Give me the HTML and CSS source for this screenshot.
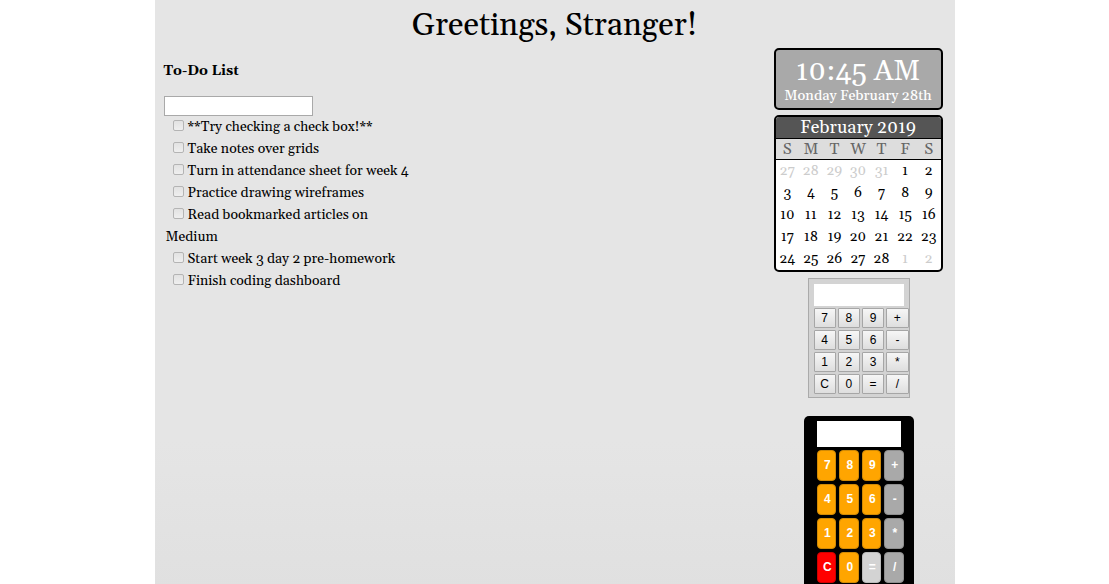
FILE: index.html
```html
<!DOCTYPE html>
<html lang="en">
<head>
<meta charset="utf-8">
<meta name="viewport" content="width=device-width, initial-scale=1">
<title>Dashboard</title>
<link rel="stylesheet" href="styles.css">
</head>
<body>
<div class="dashboard">
  <header class="greeting"><h1>Greetings, Stranger!</h1></header>
  <div class="columns">
    <main class="todo">
      <h2 id="todo-title">To-Do List</h2>
      <input class="todo-input" type="text" aria-labelledby="todo-title">
      <ul class="todo-list">
        <li><label><input type="checkbox">**Try checking a check box!**</label></li>
        <li><label><input type="checkbox">Take notes over grids</label></li>
        <li><label><input type="checkbox">Turn in attendance sheet for week 4</label></li>
        <li><label><input type="checkbox">Practice drawing wireframes</label></li>
        <li><label><input type="checkbox">Read bookmarked articles on Medium</label></li>
        <li><label><input type="checkbox">Start week 3 day 2 pre-homework</label></li>
        <li><label><input type="checkbox">Finish coding dashboard</label></li>
      </ul>
    </main>
    <aside class="widgets">
      <section class="clock">
        <div class="time">10:45 AM</div>
        <div class="date">Monday February 28th</div>
      </section>
      <section class="calendar">
        <table>
          <caption>February 2019</caption>
          <thead><tr><th>S</th><th>M</th><th>T</th><th>W</th><th>T</th><th>F</th><th>S</th></tr></thead>
          <tbody>
            <tr><td class="other">27</td><td class="other">28</td><td class="other">29</td><td class="other">30</td><td class="other">31</td><td>1</td><td>2</td></tr>
            <tr><td>3</td><td>4</td><td>5</td><td>6</td><td>7</td><td>8</td><td>9</td></tr>
            <tr><td>10</td><td>11</td><td>12</td><td>13</td><td>14</td><td>15</td><td>16</td></tr>
            <tr><td>17</td><td>18</td><td>19</td><td>20</td><td>21</td><td>22</td><td>23</td></tr>
            <tr><td>24</td><td>25</td><td>26</td><td>27</td><td>28</td><td class="other">1</td><td class="other">2</td></tr>
          </tbody>
        </table>
      </section>
      <section class="calc plain">
        <input class="display" type="text" aria-label="Calculator display">
        <div class="keys">
          <button>7</button><button>8</button><button>9</button><button>+</button>
          <button>4</button><button>5</button><button>6</button><button>-</button>
          <button>1</button><button>2</button><button>3</button><button>*</button>
          <button>C</button><button>0</button><button>=</button><button>/</button>
        </div>
      </section>
      <section class="calc dark">
        <input class="display" type="text" aria-label="Second calculator display">
        <div class="keys">
          <button>7</button><button>8</button><button>9</button><button class="op">+</button>
          <button>4</button><button>5</button><button>6</button><button class="op">-</button>
          <button>1</button><button>2</button><button>3</button><button class="op">*</button>
          <button class="clear">C</button><button>0</button><button class="equals">=</button><button class="op">/</button>
        </div>
      </section>
    </aside>
  </div>
</div>
</body>
</html>
```
FILE: styles.css
```css
* { box-sizing: border-box; }
body {
  margin: 0;
  height: 100vh;
  overflow: hidden;
  background: #fff;
  color: #000;
  font-family: Georgia, Gelasio, "Liberation Serif", serif;
}
.dashboard {
  max-width: 800px;
  min-height: 100vh;
  margin: 0 auto;
  background: linear-gradient(#e5e5e5 75%, #e0e0e0);
}
.greeting h1 {
  margin: 0;
  padding-top: 4px;
  font-size: 32px;
  font-weight: normal;
  line-height: 44px;
  text-align: center;
}
.columns {
  display: flex;
  justify-content: space-between;
  padding: 0 12px 0 9px;
}
.todo { width: 270px; }
.todo h2 {
  margin: 14px 0 16px;
  font-size: 14px;
  line-height: 18px;
}
.todo-input {
  display: block;
  width: 149px;
  height: 20px;
  border: 1px solid #a9a9a9;
  background: #fff;
}
.todo-list {
  margin: 0;
  padding: 0 0 0 2px;
  list-style: none;
  font-size: 14px;
  line-height: 22px;
}
.todo-list li { max-width: 250px; }
.todo-list input {
  appearance: none;
  width: 11px;
  height: 11px;
  margin: 0 4px 0 7px;
  border: 1px solid #b4b4b4;
  border-radius: 2px;
  background: linear-gradient(#e2e2e2, #efefef);
}
.widgets {
  display: flex;
  flex-direction: column;
  align-items: center;
  width: 169px;
}
.clock {
  width: 100%;
  height: 62px;
  padding-top: 6px;
  border: 2px solid #000;
  border-radius: 5px;
  background: #a9a9a9;
  color: #fff;
  text-align: center;
  white-space: nowrap;
}
.time { font-size: 29px; line-height: 32px; }
.date { font-size: 14px; font-weight: 500; line-height: 16px; }
.calendar {
  width: 100%;
  margin-top: 5px;
  border: 2px solid #000;
  border-radius: 5px;
  background: #fff;
  overflow: hidden;
}
.calendar table {
  width: 100%;
  table-layout: fixed;
  border-collapse: collapse;
  text-align: center;
}
.calendar caption {
  background: #555;
  color: #fff;
  font-size: 18px;
  line-height: 21px;
}
.calendar th {
  padding: 0;
  border: solid #000;
  border-width: 1px 0;
  background: #ddd;
  color: #666;
  font-size: 16px;
  font-weight: normal;
  line-height: 20px;
}
.calendar td {
  height: 22px;
  padding: 0;
  font-size: 14px;
  line-height: 18px;
}
.calendar .other { color: #ccc; }
.calc { margin-left: 1px; }
.calc .display {
  display: block;
  width: 100%;
  padding: 0;
  border: 0;
  background: #fff;
}
.keys {
  display: grid;
  grid-template-columns: repeat(4, 1fr);
}
.keys button {
  padding: 0;
  font-family: "Liberation Sans", Arial, sans-serif;
  font-size: 12px;
}
.plain {
  width: 102px;
  margin-top: 6px;
  padding: 5px 0 3px 5px;
  border: 1px solid #aaa;
  background: #d3d3d3;
}
.plain .display { width: 90px; height: 22px; }
.plain .keys {
  grid-auto-rows: 20px;
  gap: 2px;
  margin-top: 2px;
}
.plain button {
  border: 1px solid #a6a6a6;
  border-radius: 1px;
  background: linear-gradient(#f6f6f6, #dedede);
  color: #000;
}
.dark {
  width: 110px;
  margin-top: 18px;
  padding: 5px 10px 5px 13px;
  border-radius: 5px;
  background: #000;
}
.dark .display { width: 84px; height: 26px; }
.dark .keys {
  grid-auto-rows: 31px;
  gap: 3px;
  margin-top: 3px;
}
.dark button {
  padding-left: 2px;
  border: 1px solid #d18a05;
  border-radius: 4px;
  background: #ffa500;
  color: #fff;
  font-weight: bold;
}
.dark .op { border-color: #8e8e8e; background: #a9a9a9; }
.dark .clear { border-color: #d00000; background: #f00; }
.dark .equals { border-color: #bbb; background: #d3d3d3; }
```
